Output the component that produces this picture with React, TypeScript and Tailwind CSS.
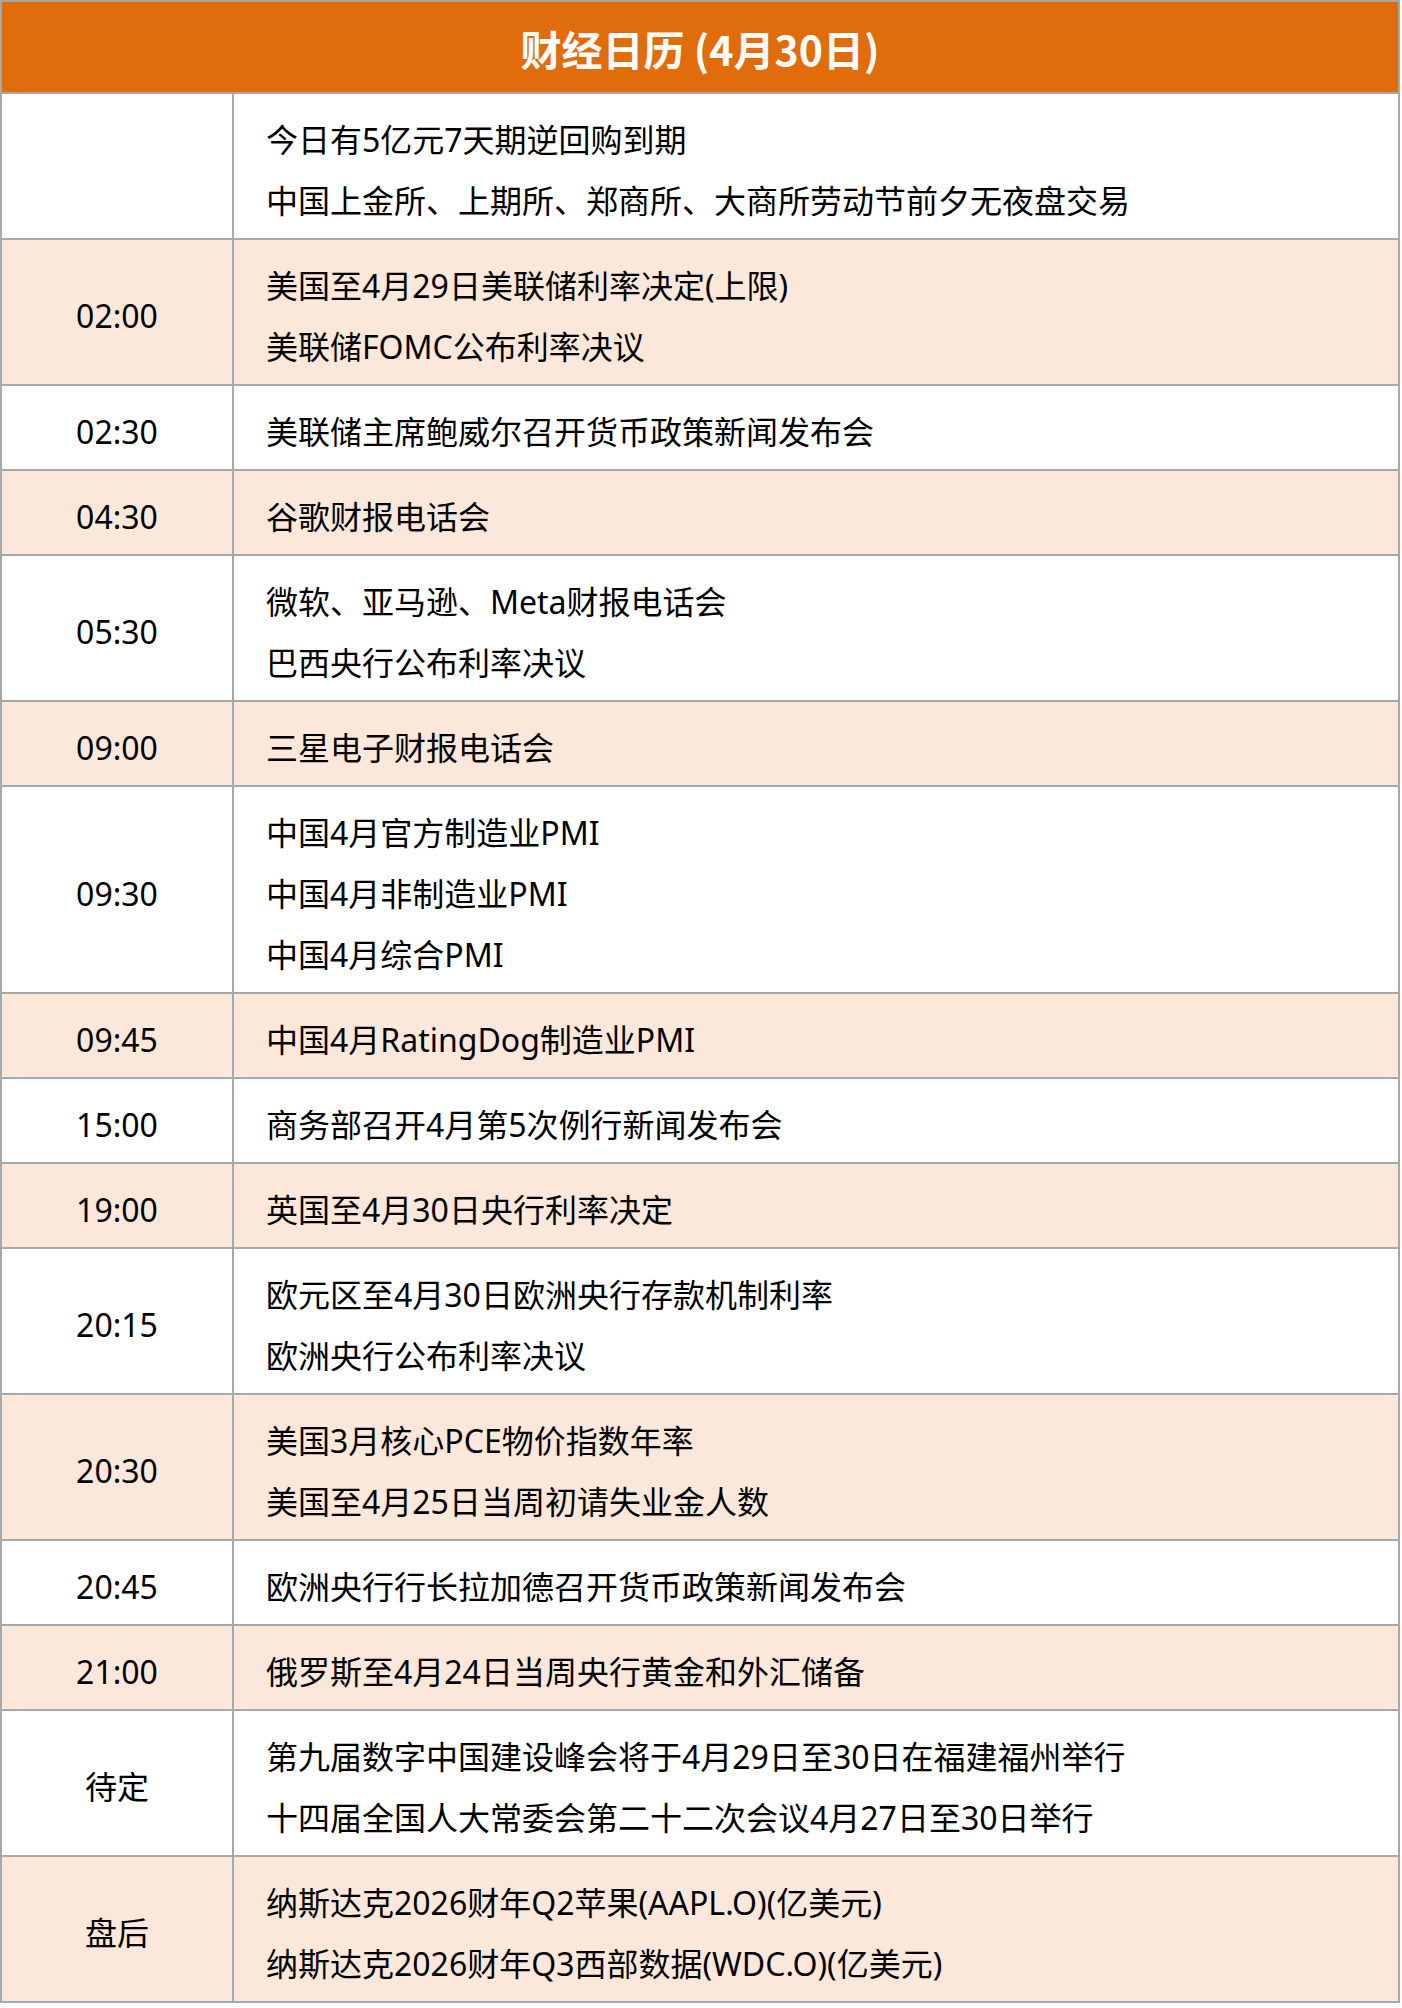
const rows: { time: string; items: string[] }[] = [
  { time: "", items: ["今日有5亿元7天期逆回购到期", "中国上金所、上期所、郑商所、大商所劳动节前夕无夜盘交易"] },
  { time: "02:00", items: ["美国至4月29日美联储利率决定(上限)", "美联储FOMC公布利率决议"] },
  { time: "02:30", items: ["美联储主席鲍威尔召开货币政策新闻发布会"] },
  { time: "04:30", items: ["谷歌财报电话会"] },
  { time: "05:30", items: ["微软、亚马逊、Meta财报电话会", "巴西央行公布利率决议"] },
  { time: "09:00", items: ["三星电子财报电话会"] },
  { time: "09:30", items: ["中国4月官方制造业PMI", "中国4月非制造业PMI", "中国4月综合PMI"] },
  { time: "09:45", items: ["中国4月RatingDog制造业PMI"] },
  { time: "15:00", items: ["商务部召开4月第5次例行新闻发布会"] },
  { time: "19:00", items: ["英国至4月30日央行利率决定"] },
  { time: "20:15", items: ["欧元区至4月30日欧洲央行存款机制利率", "欧洲央行公布利率决议"] },
  { time: "20:30", items: ["美国3月核心PCE物价指数年率", "美国至4月25日当周初请失业金人数"] },
  { time: "20:45", items: ["欧洲央行行长拉加德召开货币政策新闻发布会"] },
  { time: "21:00", items: ["俄罗斯至4月24日当周央行黄金和外汇储备"] },
  { time: "待定", items: ["第九届数字中国建设峰会将于4月29日至30日在福建福州举行", "十四届全国人大常委会第二十二次会议4月27日至30日举行"] },
  { time: "盘后", items: ["纳斯达克2026财年Q2苹果(AAPL.O)(亿美元)", "纳斯达克2026财年Q3西部数据(WDC.O)(亿美元)"] },
];

export default function App() {
  return (
    <div className="w-[1402px] bg-white font-['Noto_Sans','Noto_Sans_CJK_SC',sans-serif] text-black">
      <div className="w-[1400px] border-2 border-b-0 border-[#a8a8a8]">
        <div className="flex h-[92px] items-center justify-center border-b-2 border-[#a8a8a8] bg-[#e16c0c] pt-[4px] font-['Noto_Sans_CJK_SC',sans-serif] text-[41px] font-bold text-white">
          财经日历 (4月30日)
        </div>
        {rows.map((row, i) => (
          <div
            key={i}
            className={`grid grid-cols-[232px_1fr] border-b-2 border-[#a8a8a8] ${
              i % 2 === 1 ? "bg-[#fce8da]" : "bg-white"
            }`}
          >
            <div className="flex items-center justify-center border-r-2 border-[#a8a8a8] pt-[8px] text-[32px]">
              {row.time}
            </div>
            <div className="pt-[15px] pb-[7px] pl-[32px] text-[32px] leading-[61px]">
              {row.items.map((t) => (
                <div key={t}>{t}</div>
              ))}
            </div>
          </div>
        ))}
      </div>
    </div>
  );
}
